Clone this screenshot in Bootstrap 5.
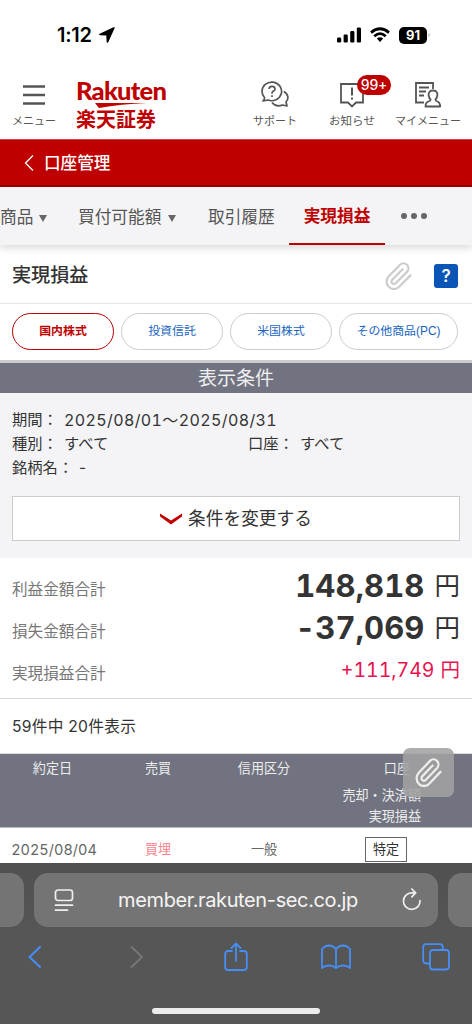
<!DOCTYPE html>
<html lang="ja">
<head>
<meta charset="utf-8">
<meta name="viewport" content="width=device-width, initial-scale=1">
<title>実現損益</title>
<link rel="stylesheet" href="https://cdn.jsdelivr.net/npm/bootstrap@5.3.0/dist/css/bootstrap.min.css">
<style>
:root{--rk-red:#bf0000;--rk-bar:#717380;--rk-pale:#f4f4f6}
body{width:472px;height:1024px;overflow:hidden;background:#fff;color:#333;font-family:"Liberation Sans","Noto Sans CJK JP",sans-serif;line-height:1}
svg{display:block;flex:none}
.jp{font-family:"Noto Sans CJK JP",sans-serif}
.inter{font-family:Inter,"Noto Sans CJK JP",sans-serif}
.tnum{font-feature-settings:"tnum"}
.status{height:70px;padding:0 41px 0 57px;color:#000}
.clock{font:600 20px/20px Inter,sans-serif;letter-spacing:-.3px}
.batt{width:28px;height:17px;border-radius:5px;background:#000;color:#fff;font:700 13px/17px Inter,sans-serif}
.top{height:69px;color:#555;font-size:11px}
.top-item{padding-top:11px}
.top-item span{line-height:14px;white-space:nowrap}
.logo{color:var(--rk-red);width:92px;padding-top:8px}
.logo-en{font:900 25.5px/25px Lato,sans-serif;letter-spacing:-.75px}
.logo-jp{font-size:20px;line-height:22px;font-weight:700}
.count{top:5px;left:41px;width:34px;height:20px;border-radius:10px;background:var(--rk-red);color:#fff;font:500 14px/20px Inter,sans-serif;letter-spacing:-.2px}
.redbar{height:48px;background:var(--rk-red);border-bottom:2px solid #960000;border-top:1px solid #d04040;color:#fff;font-size:16.6px;font-weight:500;padding-left:24px}
.tabs{height:58px;background:var(--rk-pale);box-shadow:0 3px 8px rgba(0,0,0,.15);font-size:16.7px;color:#555;position:relative}
.tabs>div{white-space:nowrap;padding-top:4px}
.tri{width:0;border:4px solid transparent;border-top:7px solid #666;border-bottom:0}
.tabs>.tab-on{color:var(--rk-red);font-weight:700;width:96px;border-bottom:2px solid var(--rk-red);padding-top:5px}
.tabs>.more{gap:4px;padding:0 0 0 16px}
.dot3{width:6px;height:6px;border-radius:50%;background:#666}
.ttl{height:59px;border-bottom:1px solid #e6e6e6;padding:4px 14px 0 12px;font-size:19.1px;font-weight:500}
.help{width:24px;height:24px;border-radius:3px;background:#0a55b5;color:#fff;font:600 17px/24px Inter,sans-serif}
.pills{height:56px;gap:7px;padding:0 12px 1px;font-size:11.9px}
.pill{width:102px;height:37px;border:1px solid #ccc;border-radius:19px;color:#1763c0;padding-top:1px}
.pill.on{border-color:var(--rk-red);color:var(--rk-red);font-weight:700}
.pill.wide{width:119px}
.bar{height:33px;border-top:3px solid #ccc;background:var(--rk-bar);color:#f0f0f2;font-size:19px;padding-top:1px}
.cond{height:165px;background:var(--rk-pale);padding:15px 12px 0;font-size:15.3px;line-height:24px}
.period{font-size:16px;letter-spacing:.38px}
.chg{height:45px;margin-top:16px;border:1px solid #ccc;background:#fff;font-size:17.7px;color:#333;gap:6px;padding-top:1px}
.totals{height:141px;border-bottom:1px solid #d8d8d8;padding:8px 12px 0}
.totals>div{height:42px}
.lab{font-size:15.6px;color:#777;padding-top:5px}
.big{font-weight:700;font-size:31px;letter-spacing:.1px;padding-bottom:4px}
.yen{font-size:25.5px;margin-left:10px}
.net{color:#e8124f;font-size:19.5px}
.cnt{height:55px;padding:2px 0 0 12px;font-size:15.7px;letter-spacing:.25px;border-bottom:1px solid #ddd}
.cols{display:grid;grid-template-columns:105px 106px 106px 155px;text-align:center}
.thead-x{height:74px;background:var(--rk-bar);color:#eee;font-size:13.1px;border-bottom:1px solid #bbb}
.thead-x div{line-height:30px}
.trow{height:35px;font-size:13.1px;color:#666;line-height:43px}
.acct{width:42px;height:25px;line-height:23px;border:1px solid #666;margin:9px 0 0 48px;color:#333}
.fab{left:403px;top:748px;width:51px;height:49px;border-radius:7px;background:rgba(162,162,162,.88)}
.safari{height:161px;background:linear-gradient(#505050,#565656 45%);position:relative;z-index:1;overflow:hidden;padding-top:10px}
.urls{height:54px;gap:10px}
.addr{height:54px;border-radius:14px;background:#747474;color:#f4f4f4}
.addr.prev{width:24px;border-radius:0 14px 14px 0}
.addr.next{width:24px;border-radius:14px 0 0 14px}
.addr.cur{width:404px;padding:0 16px 0 20px}
.host{font-size:20px;letter-spacing:-.38px}
.tools{height:60px;padding-left:28px}
.home{width:168px;height:6px;border-radius:3px;background:#ececec;margin-top:21px}
</style>
<script src="https://cdn.jsdelivr.net/npm/bootstrap@5.3.0/dist/js/bootstrap.bundle.min.js"></script>
</head>
<body class="position-relative">
<div class="status d-flex align-items-center">
  <span class="clock">1:12</span>
  <svg style="margin-left:6px" width="18" height="18" viewBox="0 0 18 18"><path d="M15.500 1.200Q17 .8 16.600 2.300L10.200 16.200Q9 17.600 8.600 15.800L8.300 9.600L2 9.300Q.2 8.900 1.600 7.700Z" fill="#000"/></svg>
  <div class="d-flex align-items-center ms-auto">
    <svg width="25" height="16" viewBox="0 0 25 16"><rect x="0" y="10.500" width="4.200" height="5" rx="1.200"/><rect x="6.600" y="7.500" width="4.200" height="8" rx="1.200"/><rect x="13.200" y="4" width="4.200" height="11.500" rx="1.200"/><rect x="19.800" y=".5" width="4.200" height="15" rx="1.200"/></svg>
    <svg style="margin-left:7px" width="22" height="16" viewBox="0 0 22 16"><g fill="none" stroke="#000" stroke-width="2.800"><path d="M2 5.600Q11-2 20 5.600M5.300 9.200Q11 4 16.700 9.200"/></g><path d="M7.800 11.600Q11 9 14.200 11.600L11 14.900Z"/></svg>
    <div class="batt text-center" style="margin-left:8px">91</div>
    <svg width="4" height="6" viewBox="0 0 4 6"><path d="M1.500 1Q4 3 1.500 5Z" fill="#aaa"/></svg>
  </div>
</div>
<header class="top d-flex jp">
  <div class="top-item d-flex flex-column align-items-center" style="width:68px">
    <svg width="22" height="32" viewBox="0 0 22 32"><path d="M0 5.500H22M0 14H22M0 22.500H22" stroke="#555" stroke-width="2.300"/></svg><span>メニュー</span>
  </div>
  <div class="logo" style="margin-left:8px">
    <div class="logo-en">Rakuten</div>
    <svg width="72" height="5" viewBox="0 0 72 5"><path d="M19 0H71Q45 1 23 5Z" fill="#bf0000"/></svg>
    <div class="logo-jp">楽天証券</div>
  </div>
  <div class="top-item d-flex flex-column align-items-center" style="width:66px;margin-left:74px">
    <svg width="28" height="32" viewBox="0 0 28 32" fill="none" stroke="#555" stroke-width="1.700"><path d="M3.500 16.500Q1 14 1 10.500A9.800 9.300 0 1 1 7 19L2 20Q3.800 18.500 3.500 16.500ZM22.800 10.500C27.500 13 28 18 25 21L26 25L21.500 24Q15 26.500 11 21.500" stroke-linejoin="round"/><path d="M8 8Q8.200 5.400 11 5.400T14 8Q14 9.600 11.800 10.500Q11 11 11 12.700M11 14.300V16" stroke-width="1.700"/></svg><span>サポート</span>
  </div>
  <div class="top-item d-flex flex-column align-items-center position-relative" style="width:72px;margin-left:8px;font-size:11.500px">
    <svg width="24" height="32" viewBox="0 0 24 32" fill="none" stroke="#555" stroke-width="1.800"><path d="M1 3H23V21.500H16L12 25.500L8 21.500H1Z"/><path d="M12 6.500V14.500M12 16.500V18.500" stroke-width="2"/></svg><span>お知らせ</span>
    <div class="count position-absolute text-center">99+</div>
  </div>
  <div class="top-item d-flex flex-column align-items-center" style="width:72px;margin-left:4px">
    <svg width="26" height="32" viewBox="0 0 26 32" fill="none" stroke="#555" stroke-width="1.800"><path d="M9 21.500H1V2H18V8"/><path d="M4 6.500H14M4 10.500H11M4 14.500H9" stroke-width="2"/><path d="M18 9.500C14 9.500 13 12.500 14 15.500Q14.300 17.500 15.600 18.500Q15.500 20 13.500 20.500Q10.500 21.500 10.500 25.500H25.200Q25.200 21.500 22.500 20.500Q20.500 20 20.400 18.500Q21.700 17.500 22 15.500C23 12.500 22 9.500 18 9.500Z" stroke-linejoin="round"/></svg><span>マイメニュー</span>
  </div>
</header>
<div class="redbar d-flex align-items-center jp">
  <svg width="10" height="16" viewBox="0 0 10 16" style="margin-right:10px"><path d="M9 .5L1.500 8L9 15.500" fill="none" stroke="#fff" stroke-width="1.300"/></svg>口座管理
</div>
<nav class="tabs d-flex">
  <div class="d-flex align-items-center" style="width:78px;gap:6px">商品<i class="tri"></i></div>
  <div class="d-flex align-items-center" style="width:130px;gap:7px">買付可能額<i class="tri"></i></div>
  <div class="d-flex align-items-center" style="width:81px">取引履歴</div>
  <div class="tab-on d-flex align-items-center justify-content-center">実現損益</div>
  <div class="more d-flex align-items-center"><i class="dot3"></i><i class="dot3"></i><i class="dot3"></i></div>
</nav>
<div class="ttl d-flex align-items-center"><span>実現損益</span>
  <svg class="ms-auto" style="margin-right:22px" width="27" height="28" viewBox="1 .5 22 22.500" preserveAspectRatio="none"><path d="M21.440 11.050l-9.190 9.190a6 6 0 0 1-8.490-8.490l9.190-9.190a4 4 0 0 1 5.660 5.660l-9.200 9.190a2 2 0 0 1-2.830-2.830l8.490-8.480" transform="translate(.3 .2)" fill="none" stroke="#ccc" stroke-width="1.800" stroke-linecap="round"/></svg>
  <div class="help text-center">?</div>
</div>
<div class="pills d-flex align-items-center">
  <div class="pill on d-flex align-items-center justify-content-center">国内株式</div>
  <div class="pill d-flex align-items-center justify-content-center">投資信託</div>
  <div class="pill d-flex align-items-center justify-content-center">米国株式</div>
  <div class="pill wide d-flex align-items-center justify-content-center">その他商品(PC)</div>
</div>
<div class="bar d-flex align-items-center justify-content-center">表示条件</div>
<section class="cond">
  <div class="d-flex"><div style="width:52px">期間：</div><div class="inter tnum period">2025/08/01〜2025/08/31</div></div>
  <div class="d-flex"><div style="width:52px">種別：</div><div style="width:184px">すべて</div><div style="width:52px">口座：</div><div>すべて</div></div>
  <div class="d-flex"><div style="width:67px">銘柄名：</div><div class="inter">-</div></div>
  <div class="chg d-flex align-items-center justify-content-center"><svg width="22" height="12" viewBox="0 0 22 12"><path d="M0 .5V3.500L11 11.500L22 3.500V.5L11 7.500Z" fill="#bf0000"/></svg>条件を変更する</div>
</section>
<section class="totals">
  <div class="d-flex align-items-center"><span class="lab">利益金額合計</span><span class="big inter tnum ms-auto">148,818</span><span class="yen">円</span></div>
  <div class="d-flex align-items-center"><span class="lab">損失金額合計</span><span class="big inter tnum ms-auto">-37,069</span><span class="yen">円</span></div>
  <div class="d-flex align-items-center"><span class="lab">実現損益合計</span><span class="net inter tnum ms-auto">+111,749</span><span class="net" style="margin-left:6px">円</span></div>
</section>
<div class="cnt inter d-flex align-items-center"><span>59件中 20件表示</span></div>
<div class="cols thead-x">
  <div>約定日</div><div>売買</div><div>信用区分</div>
  <div class="text-end" style="padding-right:51px"><div style="padding-right:11px">口座</div><div style="line-height:24px">売却・決済額</div><div style="line-height:17px">実現損益</div></div>
</div>
<div class="cols trow">
  <div class="inter tnum" style="font-size:14.500px;padding-left:3px">2025/08/04</div><div style="color:#ff8590">買埋</div><div>一般</div>
  <div><div class="acct">特定</div></div>
</div>
<footer class="safari">
  <div class="urls d-flex">
    <div class="addr prev"></div>
    <div class="addr cur d-flex align-items-center">
      <svg width="20" height="24" viewBox="0 0 20 24" fill="none" stroke="#eee" stroke-width="1.700" stroke-linecap="round"><rect x="1.500" y="2" width="17" height="10.500" rx="2.500"/><path d="M1.500 17.200H18.500M1.500 22.200H13.500"/></svg>
      <span class="host mx-auto inter">member.rakuten-sec.co.jp</span>
      <svg width="20" height="24" viewBox="0 0 20 24" fill="none" stroke="#eee" stroke-width="1.700" stroke-linecap="round" stroke-linejoin="round"><path d="M18 12.500A8.300 8.300 0 1 1 9.700 4.800H13.500M9.800 1L13.700 4.900L9.800 8.800"/></svg>
    </div>
    <div class="addr next"></div>
  </div>
  <div class="tools d-flex align-items-center">
    <svg width="14" height="22" viewBox="0 0 14 22" fill="none" stroke="#468ef5" stroke-width="2" stroke-linecap="round"><path d="M12 1L1.500 11L12 21"/></svg>
    <svg width="14" height="22" viewBox="0 0 14 22" fill="none" stroke="#777" stroke-width="1.800" stroke-linecap="round" style="margin-left:88px"><path d="M1.500 1L12 11L1.500 21"/></svg>
    <svg width="24" height="30" viewBox="0 0 24 30" fill="none" stroke="#468ef5" stroke-width="1.800" stroke-linecap="round" stroke-linejoin="round" style="margin-left:80px"><path d="M8 9H4Q1.200 9 1.200 12V25Q1.200 28 4 28H20Q22.800 28 22.800 25V12Q22.800 9 20 9H16M12 19V1.500M7.500 6L12 1.500L16.500 6"/></svg>
    <svg width="30" height="26" viewBox="0 0 30 26" fill="none" stroke="#468ef5" stroke-width="1.800" stroke-linejoin="round" style="margin-left:73px"><path d="M15 5Q12 1.500 8 1.500T1 5V24Q4 21.500 8 21.500T15 24Q18 21.500 22 21.500T29 24V5Q26 1.500 22 1.500T15 5V24"/></svg>
    <svg width="28" height="28" viewBox="0 0 28 28" fill="none" stroke="#468ef5" stroke-width="1.800" style="margin-left:71px"><path d="M8 20.500H4Q1.200 20.500 1.200 17.500V4Q1.200 1.200 4 1.200H18Q20.800 1.200 20.800 4V7"/><rect x="8" y="7" width="19" height="19.500" rx="3"/></svg>
  </div>
  <div class="home mx-auto"></div>
</footer>
<div class="fab position-absolute d-flex align-items-center justify-content-center"><svg width="27" height="29" viewBox="1 .5 22 22.500" preserveAspectRatio="none"><path d="M21.440 11.050l-9.190 9.190a6 6 0 0 1-8.490-8.490l9.190-9.190a4 4 0 0 1 5.660 5.660l-9.200 9.190a2 2 0 0 1-2.830-2.830l8.490-8.480" transform="translate(.3 .2)" fill="none" stroke="#eee" stroke-width="1.800" stroke-linecap="round"/></svg></div>
</body>
</html>
